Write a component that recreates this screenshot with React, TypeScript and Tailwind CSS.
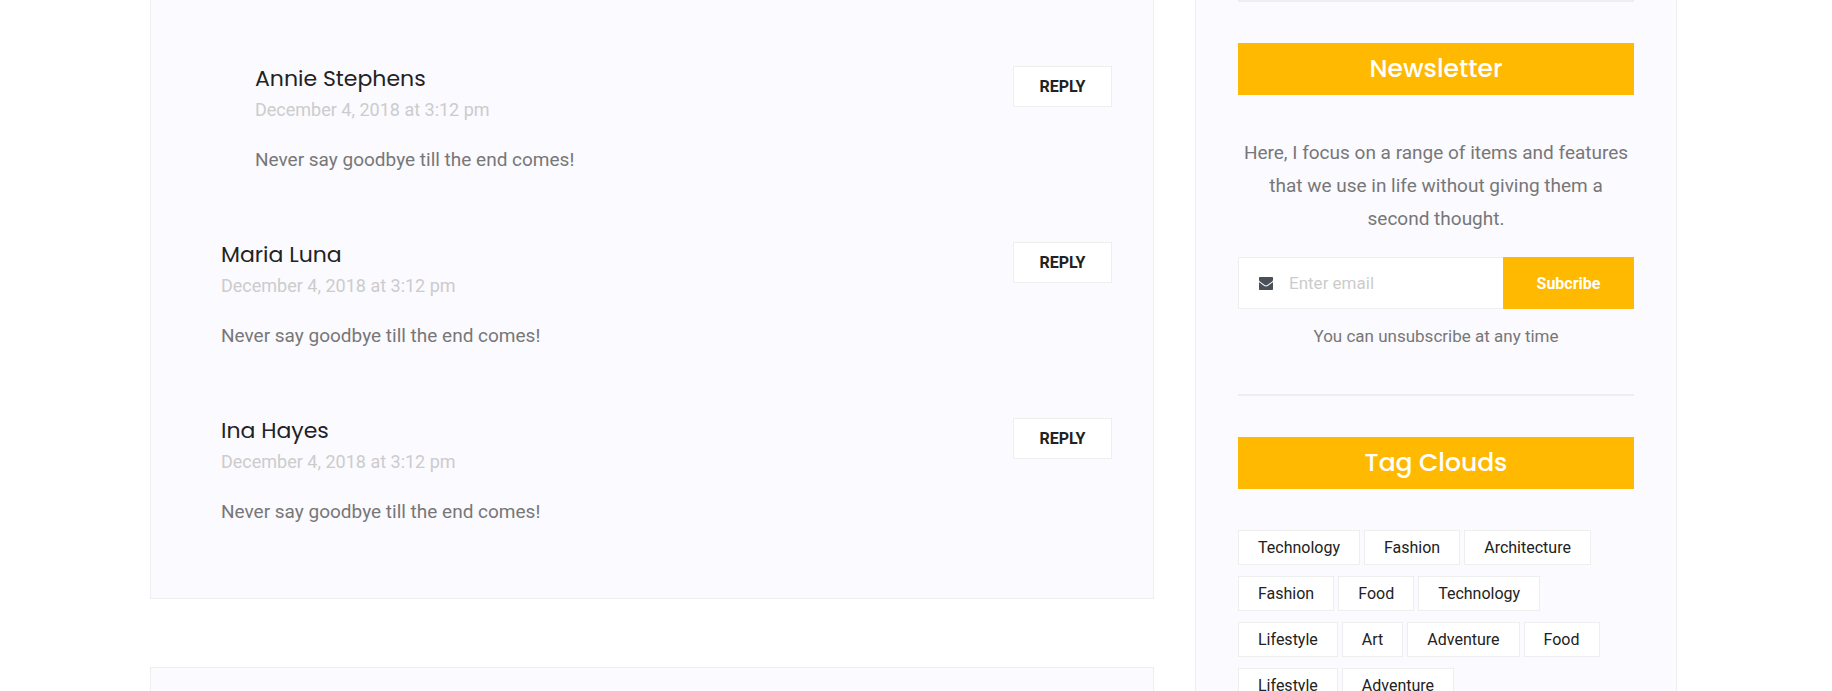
import { FormEvent, ReactNode } from "react";

type Comment = { author: string; nested?: boolean };

const comments: Comment[] = [
  { author: "Annie Stephens", nested: true },
  { author: "Maria Luna" },
  { author: "Ina Hayes" },
];

const tags = [
  "Technology",
  "Fashion",
  "Architecture",
  "Fashion",
  "Food",
  "Technology",
  "Lifestyle",
  "Art",
  "Adventure",
  "Food",
  "Lifestyle",
  "Adventure",
];

function CommentItem({ author, nested }: Comment) {
  return (
    <li className={nested ? "flex items-start justify-between pl-[34px]" : "flex items-start justify-between"}>
      <article>
        <h3 className="font-[Poppins,Inter,sans-serif] text-[22px] leading-[26px] text-[#222222]">{author}</h3>
        <p className="mt-1 text-[18px] leading-7 text-[#cccccc]">December 4, 2018 at 3:12 pm</p>
        <p className="mt-[19px] text-[19px] leading-[33px] text-[#777777]">Never say goodbye till the end comes!</p>
      </article>
      <button
        type="button"
        className="h-[41px] w-[99px] border border-[#eeeeee] bg-white text-[16px] leading-5 font-bold text-[#222222] uppercase"
      >
        Reply
      </button>
    </li>
  );
}

function WidgetTitle({ children }: { children: ReactNode }) {
  return (
    <h2 className="bg-[#ffb900] text-center font-[Poppins,Inter,sans-serif] text-[25px] leading-[52px] font-medium text-white">
      {children}
    </h2>
  );
}

function EnvelopeIcon() {
  return (
    <svg viewBox="0 0 14 13" className="h-[13px] w-[14px] fill-[#495057]" aria-hidden="true">
      <path d="M0 1C0 .4.4 0 1 0h12c.6 0 1 .4 1 1v2.200c-.3.700-.8 1.200-1.500 1.700L9 7.500C8.200 8.100 7.700 8.500 7 8.500S5.800 8.100 5 7.500L1.500 4.900C.8 4.400.3 3.900 0 3.200z" />
      <path d="M0 4.900c.3.300.6.500 1 .8l3.600 2.700C5.500 9.100 6.200 9.500 7 9.500s1.500-.4 2.400-1.100L13 5.700c.4-.3.700-.5 1-.8V12c0 .6-.4 1-1 1H1c-.6 0-1-.4-1-1z" />
    </svg>
  );
}

export default function App() {
  const handleSubmit = (event: FormEvent) => event.preventDefault();

  return (
    <div className="flex min-h-screen gap-[41px] bg-white pr-[155px] pl-[150px] font-[Roboto,sans-serif]">
      <main className="flex min-w-0 flex-1 flex-col gap-[68px]">
        <section aria-label="Comments" className="border border-t-0 border-[#eeeeee] bg-[#fbfaff] pt-[66px] pr-[41px] pb-[70px] pl-[70px]">
          <ul className="flex flex-col gap-[66px]">
            {comments.map((comment) => (
              <CommentItem key={comment.author} {...comment} />
            ))}
          </ul>
        </section>
        <section aria-label="Leave a reply" className="flex-1 border border-b-0 border-[#eeeeee] bg-[#fbfaff]" />
      </main>

      <aside className="w-[482px] shrink-0 border-x border-[#eeeeee] bg-[#fbfaff] px-[42px] pb-10">
        <hr className="h-0.5 border-0 bg-[#eeeeee]" />
        <section className="pt-[41px] text-center text-[#777777]">
          <WidgetTitle>Newsletter</WidgetTitle>
          <p className="mt-[41px] text-[19px] leading-[33px]">
            Here, I focus on a range of items and features that we use in life without giving them a second thought.
          </p>
          <form onSubmit={handleSubmit} className="mt-[22px] flex h-[52px]">
            <label
              htmlFor="email"
              aria-label="Email"
              className="flex items-center border border-r-0 border-[#eeeeee] bg-white pl-5"
            >
              <EnvelopeIcon />
            </label>
            <input
              id="email"
              type="email"
              placeholder="Enter email"
              className="min-w-0 flex-1 border border-x-0 border-[#eeeeee] bg-white pt-0.5 pl-4 text-[17px] text-[#777777] outline-none placeholder:text-[#cccccc]"
            />
            <button type="submit" className="w-[131px] bg-[#ffb900] pt-0.5 text-[16px] font-bold text-white">
              Subcribe
            </button>
          </form>
          <p className="mt-[11px] text-[17px] leading-[33px]">You can unsubscribe at any time</p>
        </section>
        <hr className="mt-[41px] h-0.5 border-0 bg-[#eeeeee]" />
        <section className="pt-[41px]">
          <WidgetTitle>Tag Clouds</WidgetTitle>
          <ul className="mt-[41px] flex flex-wrap gap-x-1 gap-y-[11px]">
            {tags.map((tag, index) => (
              <li key={index}>
                <a href="#" className="block border border-[#eeeeee] bg-white px-[19px] text-[16px] leading-[33px] text-[#222222]">
                  {tag}
                </a>
              </li>
            ))}
          </ul>
        </section>
      </aside>
    </div>
  );
}
